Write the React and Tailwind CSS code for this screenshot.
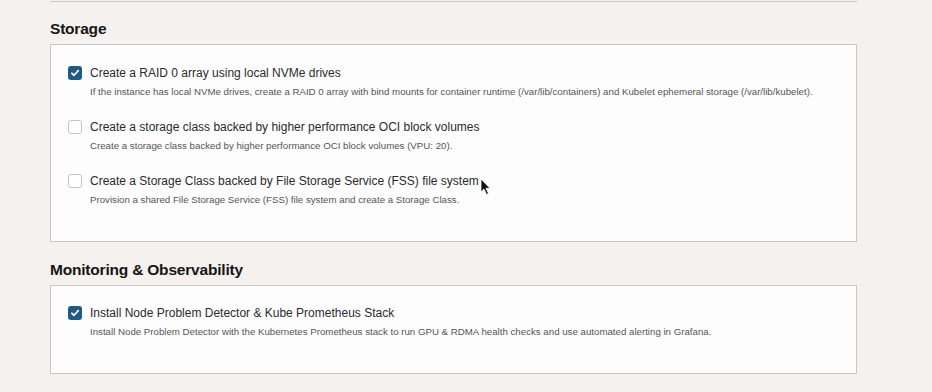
import React from 'react';

const storageOptions = [
  {
    checked: true,
    title: 'Create a RAID 0 array using local NVMe drives',
    desc: 'If the instance has local NVMe drives, create a RAID 0 array with bind mounts for container runtime (/var/lib/containers) and Kubelet ephemeral storage (/var/lib/kubelet).',
  },
  {
    checked: false,
    title: 'Create a storage class backed by higher performance OCI block volumes',
    desc: 'Create a storage class backed by higher performance OCI block volumes (VPU: 20).',
  },
  {
    checked: false,
    title: 'Create a Storage Class backed by File Storage Service (FSS) file system',
    desc: 'Provision a shared File Storage Service (FSS) file system and create a Storage Class.',
  },
];

const monitoringOptions = [
  {
    checked: true,
    title: 'Install Node Problem Detector & Kube Prometheus Stack',
    desc: 'Install Node Problem Detector with the Kubernetes Prometheus stack to run GPU & RDMA health checks and use automated alerting in Grafana.',
  },
];

function Checkbox({ checked }) {
  if (checked) {
    return (
      <div className="mt-[2px] flex h-[14px] w-[14px] shrink-0 items-center justify-center rounded-[3px] bg-[#1d5b80]">
        <svg width="10" height="10" viewBox="0 0 10 10" fill="none">
          <path d="M1.8 5.2 L4 7.3 L8.3 2.6" stroke="white" strokeWidth="1.6" strokeLinecap="round" strokeLinejoin="round" />
        </svg>
      </div>
    );
  }
  return <div className="mt-[2px] h-[14px] w-[14px] shrink-0 rounded-[3px] border border-[#c4c2c2] bg-white" />;
}

function Option({ item }) {
  return (
    <div className="flex gap-[8px]">
      <Checkbox checked={item.checked} />
      <div>
        <div className="text-[12px] leading-[18px] text-[#2b2b2b]">{item.title}</div>
        <div className="mt-[3px] text-[9.7px] leading-[14px] text-[#555]">{item.desc}</div>
      </div>
    </div>
  );
}

function Section({ title, items, className, boxPad }) {
  return (
    <div className={className}>
      <h2 className="text-[15.5px] font-bold leading-[20px] tracking-[-0.2px] text-[#161616]">{title}</h2>
      <div className={`mt-[5px] flex flex-col gap-[19px] border border-[#c9c7c7] bg-[#fdfdfe] pl-[17px] ${boxPad}`}>
        {items.map((item, i) => (
          <Option key={i} item={item} />
        ))}
      </div>
    </div>
  );
}

export default function App() {
  return (
    <div className="relative h-[392px] w-[932px] overflow-hidden bg-[#f4f1ef]" style={{ fontFamily: '"Liberation Sans", Arial, sans-serif' }}>
      <div className="ml-[50px] w-[807px]">
        <div className="h-[2px] border-b border-[#c9c7c7]" />
        <Section title="Storage" items={storageOptions} className="mt-[17px]" boxPad="pt-[19px] pb-[34px]" />
        <Section title="Monitoring & Observability" items={monitoringOptions} className="mt-[18px]" boxPad="pt-[18px] pb-[34px]" />
      </div>
      {/* mouse cursor */}
      <svg className="absolute left-[480px] top-[178px]" width="12" height="18" viewBox="0 0 12 18">
        <path d="M1 1 L1 14 L4 11 L6.5 16.5 L8.5 15.6 L6 10.3 L10 10.3 Z" fill="#111" stroke="white" strokeWidth="0.8" />
      </svg>
    </div>
  );
}
